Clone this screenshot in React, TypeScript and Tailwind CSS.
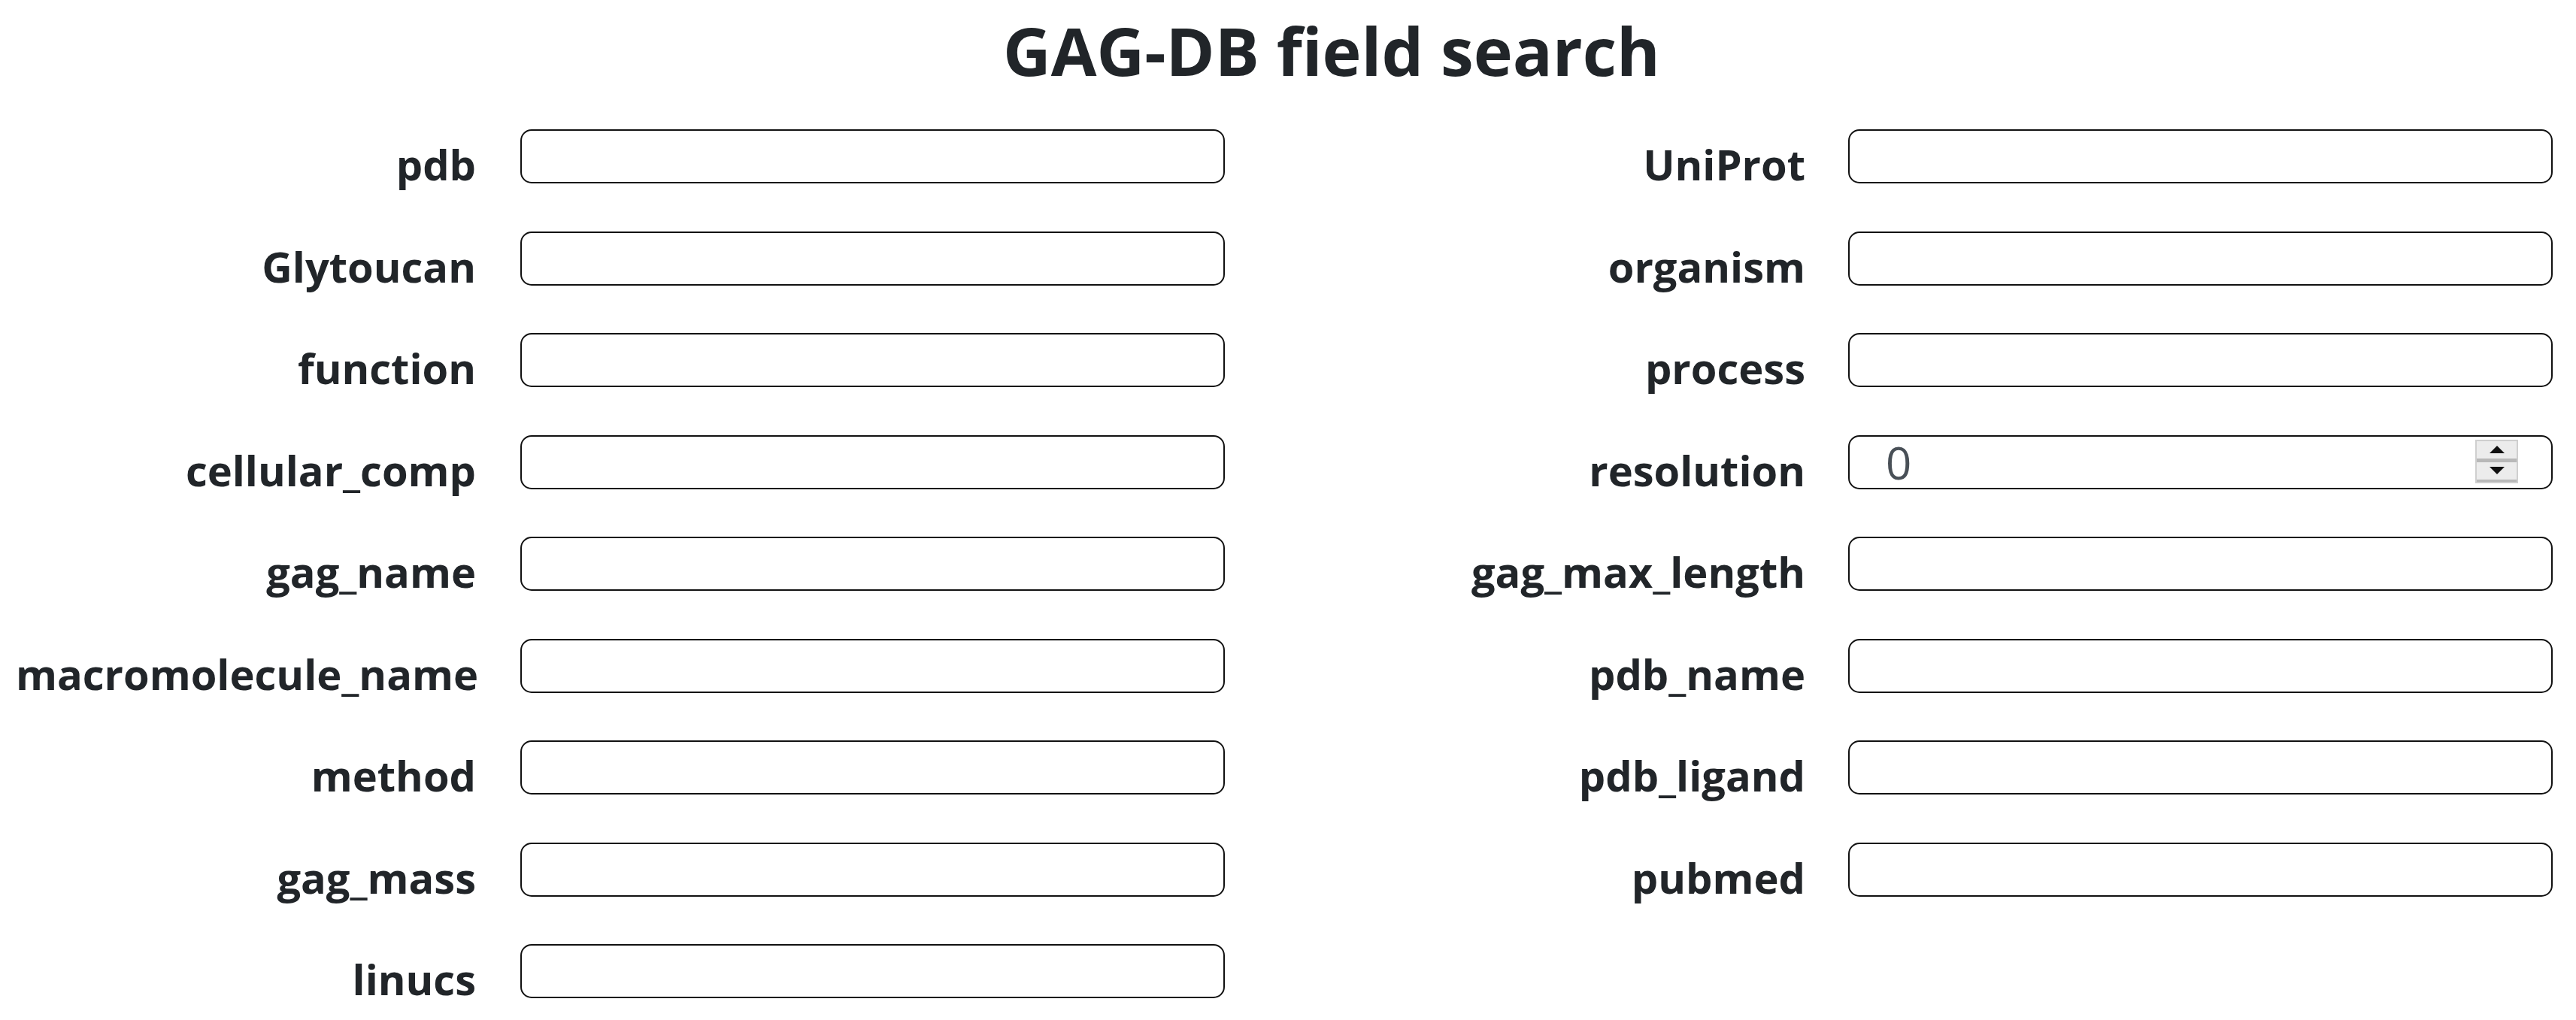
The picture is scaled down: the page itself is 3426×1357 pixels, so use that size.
import React from "react";

const LEFT = [
  "pdb",
  "Glytoucan",
  "function",
  "cellular_comp",
  "gag_name",
  "macromolecule_name",
  "method",
  "gag_mass",
  "linucs",
];

const RIGHT = [
  "UniProt",
  "organism",
  "process",
  "resolution",
  "gag_max_length",
  "pdb_name",
  "pdb_ligand",
  "pubmed",
];

function Spinner() {
  return (
    <div className="absolute right-[46px] top-[6px] flex h-[58px] w-[57px] flex-col border-2 border-[#cfcfcf] bg-[#f3f3f3]">
      <div className="flex flex-1 items-center justify-center bg-[#ececec]">
        <svg width="20" height="10" viewBox="0 0 20 10">
          <polygon points="10,0 20,10 0,10" fill="#111" />
        </svg>
      </div>
      <div className="h-[5px] bg-[#b8b8b8]" />
      <div className="flex flex-1 items-center justify-center bg-[#ececec]">
        <svg width="20" height="10" viewBox="0 0 20 10">
          <polygon points="0,0 20,0 10,10" fill="#111" />
        </svg>
      </div>
      <div className="h-[3px] bg-[#b8b8b8]" />
    </div>
  );
}

function Field({ label }: { label: string }) {
  const isNumber = label === "resolution";
  return (
    <>
      <label className="h-[72px] whitespace-nowrap pt-5 text-right text-[56px] font-bold leading-[52px] text-[#212529]">
        {label}
      </label>
      <div className="relative h-[72px]">
        <input
          type="text"
          readOnly
          defaultValue={isNumber ? "0" : ""}
          className="h-full w-full rounded-[15px] border-2 border-[#111] bg-white pl-[48px] font-['Open_Sans',sans-serif] text-[60px] text-[#495057] outline-none"
        />
        {isNumber && <Spinner />}
      </div>
    </>
  );
}

export default function App() {
  return (
    <div className="min-h-[1357px] bg-white pl-[21px] pr-[31px] font-['Open_Sans',sans-serif] text-[#212529]">
      <h1 className="pl-[126px] pt-[13px] text-center text-[88px] font-bold leading-[108px]">
        GAG-DB field search
      </h1>

      <div className="mt-[51px] flex gap-x-[160px]">
        <div className="grid grid-cols-[612px_937px] items-center gap-x-[59px] gap-y-[63.5px]">
          {LEFT.map((l) => (
            <Field key={l} label={l} />
          ))}
        </div>
        <div className="grid grid-cols-[612px_937px] content-start items-center gap-x-[57px] gap-y-[63.5px]">
          {RIGHT.map((l) => (
            <Field key={l} label={l} />
          ))}
        </div>
      </div>
    </div>
  );
}
